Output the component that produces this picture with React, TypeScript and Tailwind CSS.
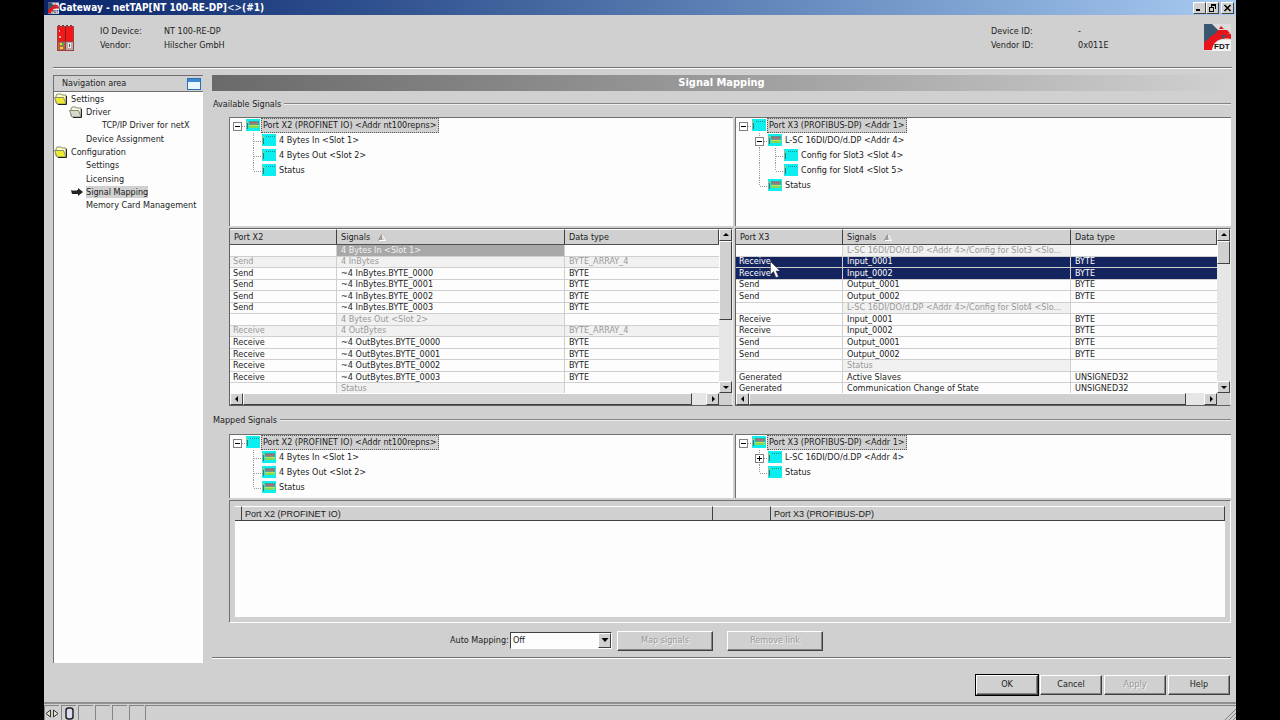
import { useState, type ReactNode } from "react";
import clsx from "clsx";

type Guide = "blank" | "line" | "tee" | "end" | "minus" | "plus" | "minusTee" | "plusTee";

type TreeRow = {
  guides: Guide[];
  label: string;
  mapped?: boolean;
  root?: boolean;
};

type SignalRow = {
  port: string;
  signal: string;
  type: string;
  kind?: "group" | "activeGroup" | "disabled" | "selected";
};

const raised = "border border-t-white border-l-white border-r-[#404040] border-b-[#404040] bg-[#d0d0d0]";

const navItems = [
  { label: "Settings", level: 0, folder: "open" },
  { label: "Driver", level: 1, folder: "closed" },
  { label: "TCP/IP Driver for netX", level: 2 },
  { label: "Device Assignment", level: 1 },
  { label: "Configuration", level: 0, folder: "open" },
  { label: "Settings", level: 1 },
  { label: "Licensing", level: 1 },
  { label: "Signal Mapping", level: 1, active: true },
  { label: "Memory Card Management", level: 1 },
];

const availableX2: TreeRow[] = [
  { guides: ["minus"], label: "Port X2 (PROFINET IO) <Addr nt100repns>", mapped: true, root: true },
  { guides: ["blank", "tee"], label: "4 Bytes In <Slot 1>" },
  { guides: ["blank", "tee"], label: "4 Bytes Out <Slot 2>" },
  { guides: ["blank", "end"], label: "Status" },
];

const availableX3: TreeRow[] = [
  { guides: ["minus"], label: "Port X3 (PROFIBUS-DP) <Addr 1>", root: true },
  { guides: ["blank", "minusTee"], label: "L-SC 16DI/DO/d.DP <Addr 4>", mapped: true },
  { guides: ["blank", "line", "tee"], label: "Config for Slot3 <Slot 4>" },
  { guides: ["blank", "line", "end"], label: "Config for Slot4 <Slot 5>" },
  { guides: ["blank", "end"], label: "Status", mapped: true },
];

const mappedX2: TreeRow[] = [
  { guides: ["minus"], label: "Port X2 (PROFINET IO) <Addr nt100repns>", root: true },
  { guides: ["blank", "tee"], label: "4 Bytes In <Slot 1>", mapped: true },
  { guides: ["blank", "tee"], label: "4 Bytes Out <Slot 2>", mapped: true },
  { guides: ["blank", "end"], label: "Status", mapped: true },
];

const mappedX3: TreeRow[] = [
  { guides: ["minus"], label: "Port X3 (PROFIBUS-DP) <Addr 1>", mapped: true, root: true },
  { guides: ["blank", "plusTee"], label: "L-SC 16DI/DO/d.DP <Addr 4>" },
  { guides: ["blank", "end"], label: "Status" },
];

const signalsX2: SignalRow[] = [
  { port: "", signal: "4 Bytes In <Slot 1>", type: "", kind: "activeGroup" },
  { port: "Send", signal: "4 InBytes", type: "BYTE_ARRAY_4", kind: "disabled" },
  { port: "Send", signal: "~4 InBytes.BYTE_0000", type: "BYTE" },
  { port: "Send", signal: "~4 InBytes.BYTE_0001", type: "BYTE" },
  { port: "Send", signal: "~4 InBytes.BYTE_0002", type: "BYTE" },
  { port: "Send", signal: "~4 InBytes.BYTE_0003", type: "BYTE" },
  { port: "", signal: "4 Bytes Out <Slot 2>", type: "", kind: "group" },
  { port: "Receive", signal: "4 OutBytes", type: "BYTE_ARRAY_4", kind: "disabled" },
  { port: "Receive", signal: "~4 OutBytes.BYTE_0000", type: "BYTE" },
  { port: "Receive", signal: "~4 OutBytes.BYTE_0001", type: "BYTE" },
  { port: "Receive", signal: "~4 OutBytes.BYTE_0002", type: "BYTE" },
  { port: "Receive", signal: "~4 OutBytes.BYTE_0003", type: "BYTE" },
  { port: "", signal: "Status", type: "", kind: "group" },
];

const signalsX3: SignalRow[] = [
  { port: "", signal: "L-SC 16DI/DO/d.DP <Addr 4>/Config for Slot3 <Slo...", type: "", kind: "group" },
  { port: "Receive", signal: "Input_0001", type: "BYTE", kind: "selected" },
  { port: "Receive", signal: "Input_0002", type: "BYTE", kind: "selected" },
  { port: "Send", signal: "Output_0001", type: "BYTE" },
  { port: "Send", signal: "Output_0002", type: "BYTE" },
  { port: "", signal: "L-SC 16DI/DO/d.DP <Addr 4>/Config for Slot4 <Slo...", type: "", kind: "group" },
  { port: "Receive", signal: "Input_0001", type: "BYTE" },
  { port: "Receive", signal: "Input_0002", type: "BYTE" },
  { port: "Send", signal: "Output_0001", type: "BYTE" },
  { port: "Send", signal: "Output_0002", type: "BYTE" },
  { port: "", signal: "Status", type: "", kind: "group" },
  { port: "Generated", signal: "Active Slaves", type: "UNSIGNED32" },
  { port: "Generated", signal: "Communication Change of State", type: "UNSIGNED32" },
];

function FdtLogo({ className }: { className?: string }) {
  return (
    <svg viewBox="0 0 27 27" className={className}>
      <rect width="27" height="27" fill="#dcdcdc" />
      <path d="M0 0h8l8 8-6 4-6 6-4 3z" fill="#38566f" />
      <path d="M0 18c4-1 5-5 9-7 4-3 11-3 18-1v5c-7-1-11 0-14 2-4 3-4 6-5 9H0z" fill="#e8141c" />
      <path d="M17 2l3 3h-5zM14 6h9l3 3H12z" fill="#e8141c" />
      <path d="M17 11l2 4 3-4z" fill="#38566f" />
      <path d="M8 27c1-7 4-11 12-11h7v11z" fill="#f4f4f4" />
      <text x="10" y="25" fontFamily="Liberation Sans" fontSize="8" fontWeight="bold" fill="#111">FDT</text>
    </svg>
  );
}

function DeviceIcon() {
  return (
    <svg viewBox="0 0 17 26" className="h-[26px] w-[17px]" shapeRendering="crispEdges">
      <path d="M1 0h2v2H1zM5 0h2v2H5zM9 0h2v2H9zM13 0h2v2h-2z" fill="#8a3030" />
      <rect y="1" width="17" height="25" fill="#a04040" />
      <rect x="1" y="2" width="7" height="14" fill="#f01818" />
      <rect x="9" y="2" width="7" height="14" fill="#f01818" />
      <path d="M8 2h1v14H8z" fill="#7c2020" />
      <path d="M2 5h1v2H2zM2 11h2v2H2z" fill="#ffb0b0" />
      <rect x="1" y="17" width="7" height="8" fill="#b86048" />
      <rect x="9" y="17" width="7" height="8" fill="#b4aaaa" />
      <path d="M3 18h2v2H3zM3 22h3v2H3z" fill="#f3dc28" />
      <path d="M5 18h2v3H5z" fill="#3fae49" />
      <path d="M11 18h3v5h-3z" fill="#ececec" />
      <path d="M12 19h1v3h-1z" fill="#555" />
    </svg>
  );
}

function FolderIcon({ open }: { open: boolean }) {
  return (
    <svg viewBox="0 0 14 12" className="h-3 w-[14px] shrink-0">
      <path d="M2 10V3l1-2h4l1 1h4v8z" fill={open ? "#ffffc0" : "#f4f4e8"} stroke="#8a8a70" />
      <path d="M0.500 4.500h9l2.500 6.500H3z" fill={open ? "#eeea30" : "#d8d8cc"} stroke="#8a8a70" />
      <path d="M12.500 3v8.500H4" fill="none" stroke="#222" />
    </svg>
  );
}

function ArrowIcon() {
  return (
    <svg viewBox="0 0 12 8" className="h-2 w-3 shrink-0">
      <path d="M0 2h7V0l5 4-5 4V6H1z" fill="#222" />
      <path d="M0 2h6v1H1z" fill="#999" />
    </svg>
  );
}

function ModuleIcon({ mapped }: { mapped?: boolean }) {
  return (
    <svg viewBox="0 0 14 12" className="mb-px h-3 w-[14px] shrink-0" shapeRendering="crispEdges">
      <rect width="14" height="12" fill="#0ceef0" />
      <path d="M1 3h1v7H1z" fill="#8a5a3a" />
      <path d="M1 2h1v2H1z" fill="#f0b030" />
      {mapped ? (
        <>
          <path d="M3 2h10v1H3z" fill="#4a9a9c" />
          <rect x="3" y="3" width="10" height="2" fill="#8a8080" />
          <path d="M4 3h1v1H4zM6 3h1v1H6zM8 3h1v1H8zM10 3h1v1h-1z" fill="#d05858" />
          <rect x="3" y="5" width="10" height="1" fill="#6a9a90" />
          <rect x="3" y="6" width="10" height="1" fill="#c8e050" />
          <rect x="3" y="7" width="10" height="2" fill="#7edc58" />
        </>
      ) : (
        <path d="M4 2h1v1H4zM6 2h1v1H6zM8 2h1v1H8zM10 2h1v1h-1zM12 2h1v1h-1z" fill="#118f96" />
      )}
    </svg>
  );
}

function GuideCell({ kind }: { kind: Guide }) {
  const down = kind === "line" || kind === "tee" || kind === "minusTee" || kind === "plusTee";
  // an expanded or collapsed branch only needs its own vertical line when siblings follow
  const up = down || kind === "end";
  const box = kind.startsWith("minus") || kind.startsWith("plus");
  const across = kind !== "blank" && kind !== "line";
  return (
    <svg viewBox="0 0 16 15" className="h-[15px] w-4 shrink-0" shapeRendering="crispEdges">
      <g stroke="#999" strokeDasharray="1 1">
        {up && <path d="M7.500 0v8" />}
        {down && <path d="M7.500 8v7" />}
        {across && <path d="M8 8.500h8" />}
      </g>
      {box && (
        <>
          <rect x="3.500" y="4.500" width="8" height="8" fill="#fff" stroke="#808080" />
          <path d={kind.startsWith("plus") ? "M5 8.500h5M7.500 6v5" : "M5 8.500h5"} stroke="#000" />
        </>
      )}
    </svg>
  );
}

function Tree({ rows }: { rows: TreeRow[] }) {
  return (
    <ul className="overflow-hidden border-t border-l border-[#707070] bg-[#fdfdfd]">
      {rows.map((row) => (
        <li key={row.label} className="flex h-[15px] items-center">
          {row.guides.map((g, i) => (
            <GuideCell key={i} kind={g} />
          ))}
          <ModuleIcon mapped={row.mapped} />
          <span
            className={clsx(
              "ml-px border px-px leading-[13px] whitespace-nowrap",
              row.root ? "border-dotted border-[#555] bg-[#d0d0d0]" : "border-transparent",
            )}
          >
            {row.label}
          </span>
        </li>
      ))}
    </ul>
  );
}

function ScrollArrow({ dir }: { dir: "up" | "down" | "left" | "right" }) {
  const paths = {
    up: "M4 1L1 4h6z",
    down: "M4 5L1 2h6z",
    left: "M2 3l3-3v6z",
    right: "M6 3L3 0v6z",
  };
  return (
    <button aria-label={"Scroll " + dir} className={clsx(raised, "flex h-3 w-[13px] shrink-0 items-center justify-center")}>
      <svg viewBox="0 0 8 6" className="h-[6px] w-2">
        <path d={paths[dir]} fill="#000" />
      </svg>
    </button>
  );
}

function SignalTable({
  port,
  rows,
  thumbY,
  thumbX,
  children,
}: {
  port: string;
  rows: SignalRow[];
  thumbY: string;
  thumbX: string;
  children?: ReactNode;
}) {
  return (
    <div className="relative flex h-[178px] flex-col overflow-hidden border border-t-[#606060] border-r-[#eee] border-b-[#606060] border-l-[#606060] bg-[#d0d0d0]">
      <div className="flex h-[164px]">
        <div className="min-w-0 flex-1 overflow-hidden bg-[#fdfdfd]">
          <table className="h-[166px] w-full table-fixed border-separate border-spacing-0 leading-[9px]">
            <colgroup>
              <col className="w-[107px]" />
              <col className="w-[228px]" />
              <col />
            </colgroup>
            <thead>
              <tr className="h-4">
                {[port, "Signals", "Data type"].map((h) => (
                  <th
                    key={h}
                    className="border-t border-r border-b border-t-white border-r-[#404040] border-b-[#505050] bg-[#d0d0d0] p-0 pl-1 text-left font-normal"
                  >
                    {h}
                    {h === "Signals" && (
                      <svg viewBox="0 0 8 7" className="ml-2 inline h-[7px] w-2">
                        <path d="M7.500 6.500H0.500" stroke="#fff" />
                        <path d="M4 0.500l3.500 6" stroke="#fff" />
                        <path d="M4 0.500l-3.500 6" stroke="#777" />
                        <path d="M4 1.500v4.500H2z" fill="#999" />
                      </svg>
                    )}
                  </th>
                ))}
              </tr>
            </thead>
            <tbody>
              {rows.map((row, i) => (
                <tr
                  key={i}
                  className={clsx(
                    row.kind === "selected" && "bg-[#14245f] text-white",
                    row.kind === "disabled" && "bg-[#f1f1f1] text-[#999]",
                    row.kind === "group" && "text-[#999]",
                  )}
                >
                  <td className="border-r border-b border-[#cfcfcf] p-0 pl-[3px] whitespace-nowrap">{row.port}</td>
                  <td
                    className={clsx(
                      "border-r border-b border-[#cfcfcf] p-0 pl-1 whitespace-nowrap",
                      row.kind === "group" && "bg-[#f1f1f1]",
                      row.kind === "activeGroup" && "bg-[#a8a8a8] text-[#f0f0f0]",
                    )}
                  >
                    {row.signal}
                  </td>
                  <td className="border-b border-[#cfcfcf] p-0 pl-1 whitespace-nowrap">{row.type}</td>
                </tr>
              ))}
            </tbody>
          </table>
        </div>
        <div className="flex w-[13px] flex-col bg-[#e6e6e6]">
          <ScrollArrow dir="up" />
          <div className={clsx(raised, thumbY)} />
          <div className="flex-1" />
          <ScrollArrow dir="down" />
        </div>
      </div>
      <div className="flex h-3">
        <div className="flex min-w-0 flex-1 bg-[#e6e6e6]">
          <ScrollArrow dir="left" />
          <div className="min-w-0 flex-1">
            <div className={clsx(raised, "h-3", thumbX)} />
          </div>
          <ScrollArrow dir="right" />
        </div>
        <div className="w-[13px]" />
      </div>
      {children}
    </div>
  );
}

function SectionLabel({ children }: { children: ReactNode }) {
  return (
    <h2 className="flex h-[14px] items-center gap-[3px] pl-px leading-[14px]">
      {children}
      <span className="h-[2px] flex-1 border-t border-b border-t-[#858585] border-b-[#eee]" />
    </h2>
  );
}

function PushButton({ children, disabled, primary, className }: { children: ReactNode; disabled?: boolean; primary?: boolean; className: string }) {
  return (
    <button
      disabled={disabled}
      className={clsx(
        raised,
        "h-5 shadow-[inset_-1px_-1px_0_#858585]",
        disabled && "text-[#999] [text-shadow:1px_1px_0_#f4f4f4]",
        primary && "outline outline-black",
        className,
      )}
    >
      {children}
    </button>
  );
}

function TitleButton({ label, children }: { label: string; children: ReactNode }) {
  return (
    <button aria-label={label} className={clsx(raised, "flex h-3 w-[13px] items-center justify-center")}>
      <svg viewBox="0 0 9 8" className="h-2 w-[9px]" fill="none" stroke="#000" shapeRendering="crispEdges">
        {children}
      </svg>
    </button>
  );
}

export default function App() {
  const [autoMapping, setAutoMapping] = useState("Off");

  return (
    <div className="min-h-screen bg-black px-11 font-['DejaVu_Sans_Condensed','DejaVu_Sans',sans-serif] text-[9px] text-[#1c1c1c]">
      <div className="flex min-h-screen flex-col bg-[#d0d0d0]">
        <header className="flex h-[15px] items-center bg-linear-to-r from-[#0a246a] to-[#a6caf0] pr-[2px]">
          <FdtLogo className="ml-1 h-3 w-[11px]" />
          <h1 className="flex-1 text-[10px] leading-[14px] font-bold text-white">
            Gateway - netTAP[NT 100-RE-DP]<span className="font-normal">&lt;&gt;</span>(#1)
          </h1>
          <TitleButton label="Minimize">
            <path d="M1 6.500h4M1 5.500h4" />
          </TitleButton>
          <TitleButton label="Restore">
            <path d="M3 0.500h5M3 1.500h5M7.500 1v4M3.500 1v2M1 3.500h5M1.500 3v4.500h4V3" />
          </TitleButton>
          <span className="w-[2px]" />
          <TitleButton label="Close">
            <path d="M1.500 1l6 6M7.500 1l-6 6" strokeWidth="1.500" shapeRendering="auto" />
          </TitleButton>
        </header>

        <div className="mr-1 ml-[9px] flex h-[53px] items-start border-b border-[#707070] pt-[9px] leading-[14px] shadow-[0_1px_0_#fff]">
          <div className="w-[47px] pt-px pl-1">
            <DeviceIcon />
          </div>
          <dl className="grid flex-1 grid-cols-[64px_1fr]">
            <dt>IO Device:</dt>
            <dd>NT 100-RE-DP</dd>
            <dt>Vendor:</dt>
            <dd>Hilscher GmbH</dd>
          </dl>
          <dl className="grid w-[213px] grid-cols-[87px_1fr]">
            <dt>Device ID:</dt>
            <dd>-</dd>
            <dt>Vendor ID:</dt>
            <dd>0x011E</dd>
          </dl>
          <FdtLogo className="mr-px size-[27px]" />
        </div>

        <div className="mt-[7px] mr-[5px] ml-[9px] flex flex-1 gap-[9px]">
          <nav className="w-[150px] border-t border-l border-[#707070] bg-[#fdfdfd]">
            <div className="flex h-4 items-center justify-between border-b border-[#707070] bg-[#d0d0d0] pr-[2px] pl-2">
              <span>Navigation area</span>
              <svg viewBox="0 0 14 12" className="h-3 w-[14px]">
                <rect x="0.500" y="0.500" width="13" height="11" fill="#eaf6fd" stroke="#2c6fb5" />
                <rect x="1" y="1" width="12" height="3" fill="#3b8ad4" />
              </svg>
            </div>
            <ul className="grid h-[120px] auto-rows-fr">
              {navItems.map((item, i) => (
                <li key={i} className="flex items-center">
                  <a
                    href="#"
                    className={clsx(
                      "flex items-center gap-[3px] whitespace-nowrap",
                      item.level === 1 && (item.folder ? "pl-[15px]" : item.active ? "pl-[17px]" : "pl-8"),
                      item.level === 2 && "pl-12",
                    )}
                  >
                    {item.folder && <FolderIcon open={item.folder === "open"} />}
                    {item.active && <ArrowIcon />}
                    <span className={clsx("leading-3", item.active && "bg-[#d0d0d0]")}>{item.label}</span>
                  </a>
                </li>
              ))}
            </ul>
          </nav>

          <main className="flex min-w-0 flex-1 flex-col">
            <h2 className="h-4 bg-linear-to-r from-[#6a6a6a] to-[#d0d0d0] text-center text-[11px] leading-4 font-bold text-white">
              Signal Mapping
            </h2>

            <section className="pt-[6px]">
              <SectionLabel>Available Signals</SectionLabel>
              <div className="mt-[6px] ml-[17px] grid grid-cols-[504fr_496fr] grid-rows-[109px_178px] gap-[2px]">
                <Tree rows={availableX2} />
                <Tree rows={availableX3} />
                <SignalTable port="Port X2" rows={signalsX2} thumbY="h-[79px]" thumbX="w-[97%]" />
                <SignalTable port="Port X3" rows={signalsX3} thumbY="h-[23px]" thumbX="w-[96%]">
                  <svg viewBox="0 0 12 19" className="absolute top-8 left-[34px] h-[19px] w-3">
                    <path d="M0.500 0.500v13l3-3 2.500 6 2.500-1-2.500-5.500h4z" fill="#fff" stroke="#334" strokeWidth="0.500" />
                  </svg>
                </SignalTable>
              </div>
            </section>

            <section className="flex flex-1 flex-col pt-[7px]">
              <SectionLabel>Mapped Signals</SectionLabel>
              <div className="mt-[7px] ml-[17px] grid h-16 grid-cols-[504fr_496fr] gap-[2px]">
                <Tree rows={mappedX2} />
                <Tree rows={mappedX3} />
              </div>
              <div className="mt-[2px] ml-[17px] flex flex-1 border border-t-[#707070] border-r-white border-b-white border-l-[#707070] p-[5px]">
                <div className="flex-1 bg-[#fdfdfd]">
                  <table className="w-full table-fixed border-separate border-spacing-0 font-['Liberation_Sans',sans-serif] leading-3">
                    <colgroup>
                      <col className="w-[7px]" />
                      <col className="w-[471px]" />
                      <col className="w-[58px]" />
                      <col />
                    </colgroup>
                    <thead>
                      <tr className="h-[15px]">
                        {["", "Port X2 (PROFINET IO)", " ", "Port X3 (PROFIBUS-DP)"].map((h) => (
                          <th
                            key={h}
                            className="border-t border-r border-b border-t-white border-r-[#404040] border-b-[#404040] bg-[#d0d0d0] p-0 pl-[3px] text-left font-normal"
                          >
                            {h}
                          </th>
                        ))}
                      </tr>
                    </thead>
                  </table>
                </div>
              </div>
              <div className="flex h-[35px] items-center border-b border-[#707070] pt-px pl-[238px] shadow-[0_1px_0_#fff]">
                <label htmlFor="auto-mapping" className="w-[60px] whitespace-nowrap">
                  Auto Mapping:
                </label>
                <div className="relative">
                  <select
                    id="auto-mapping"
                    value={autoMapping}
                    onChange={(e) => setAutoMapping(e.target.value)}
                    className="block h-[17px] w-[102px] appearance-none border border-t-[#404040] border-r-white border-b-white border-l-[#404040] bg-[#fdfdfd] pl-[2px] leading-[15px]"
                  >
                    <option>Off</option>
                    <option>On</option>
                  </select>
                  <span className={clsx(raised, "pointer-events-none absolute top-px right-px flex h-[15px] w-[13px] items-center justify-center")}>
                    <svg viewBox="0 0 8 5" className="h-[5px] w-2">
                      <path d="M0.500 0h7L4 4z" fill="#000" />
                    </svg>
                  </span>
                </div>
                <PushButton disabled className="ml-[5px] w-24">
                  Map signals
                </PushButton>
                <PushButton disabled className="ml-[14px] w-24">
                  Remove link
                </PushButton>
              </div>
              <div className="h-[5px]" />
            </section>
          </main>
        </div>

        <div className="flex justify-end gap-[2px] pt-3 pr-[6px] pb-[7px]">
          <PushButton primary className="w-[62px]">
            OK
          </PushButton>
          <PushButton className="w-[62px]">Cancel</PushButton>
          <PushButton disabled className="w-[62px]">
            Apply
          </PushButton>
          <PushButton className="w-[62px]">Help</PushButton>
        </div>

        <footer className="flex h-[18px] gap-px border-t-2 border-[#909090] pt-px">
          <div className="grid w-[100px] grid-cols-6 gap-[2px]">
            <span className="flex items-center justify-center border-t border-l border-[#858585]">
              <svg viewBox="0 0 14 9" className="h-[9px] w-[14px]" fill="none" stroke="#333">
                <path d="M5.500 1v7L1 4.500zM8.500 1v7L13 4.500z" fill="#e8e4c8" />
              </svg>
            </span>
            <span className="flex items-center justify-center border-t border-l border-[#858585]">
              <svg viewBox="0 0 9 13" className="h-[13px] w-[9px]">
                <rect x="1" y="1" width="7" height="11" rx="2.500" fill="#d8dcec" stroke="#222" strokeWidth="1.500" />
              </svg>
            </span>
            <span className="border-t border-l border-[#858585]" />
            <span className="border-t border-l border-[#858585]" />
            <span className="border-t border-l border-[#858585]" />
            <span className="border-t border-l border-[#858585]" />
          </div>
          <div className="flex flex-1 items-end justify-end border-t border-l border-[#858585]">
            <svg viewBox="0 0 12 12" className="size-3" stroke="#808080">
              <path d="M1 12L12 1M5 12l7-7M9 12l3-3" />
            </svg>
          </div>
        </footer>
      </div>
    </div>
  );
}
